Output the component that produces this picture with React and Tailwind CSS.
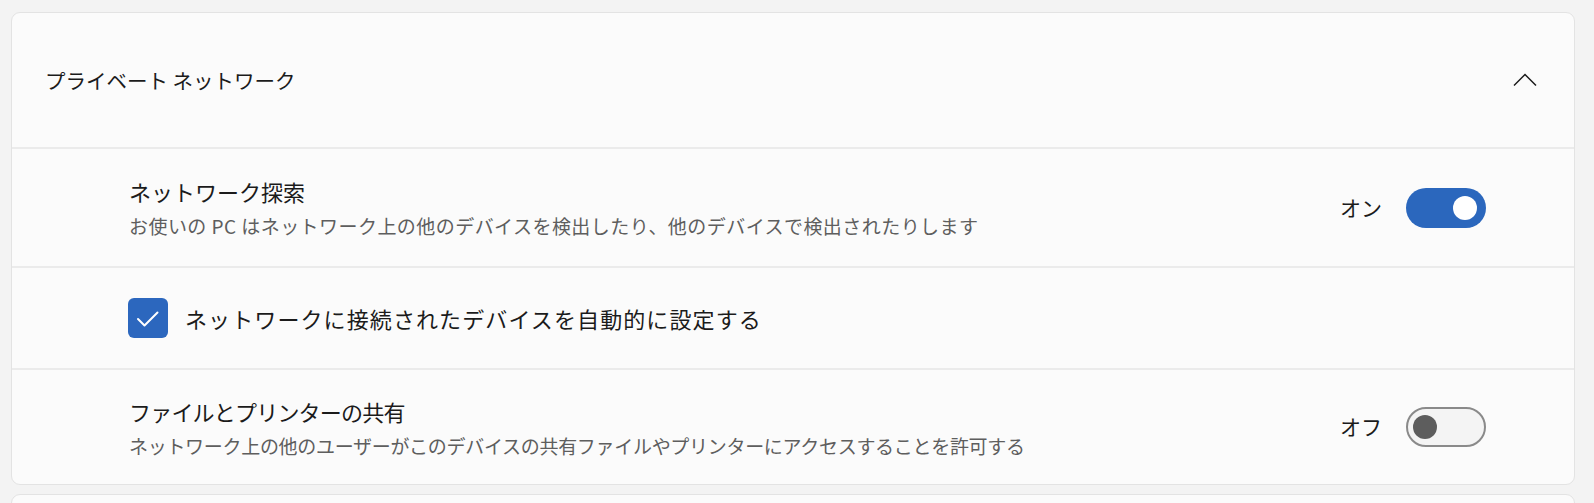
import React from "react";

const FONT = { fontFamily: '"Noto Sans CJK JP", "Noto Sans", sans-serif' };

function Toggle({ on }) {
  if (on) {
    return (
      <div className="flex h-[40px] w-[80px] items-center justify-end rounded-full bg-[#2b67bd] pr-[9px]">
        <div className="h-[24px] w-[24px] rounded-full bg-white" />
      </div>
    );
  }
  return (
    <div className="flex h-[40px] w-[80px] items-center justify-start rounded-full border-2 border-[#8a8a8a] bg-[#f4f4f4] pl-[5px]">
      <div className="h-[24px] w-[24px] rounded-full bg-[#5d5d5d]" />
    </div>
  );
}

function SettingRow({ title, desc, on, height, last, titleTrack, descTrack }) {
  return (
    <div
      className={`flex items-center justify-between pl-[117px] pr-[88px] ${height} ${
        last ? "" : "border-b-2 border-[#ebebeb]"
      }`}
    >
      <div className="flex flex-col">
        <div className={`h-[30px] text-[22px] leading-[30px] text-[#1b1b1b] ${titleTrack}`}>{title}</div>
        <div className={`mt-[6px] h-[27px] text-[19px] leading-[27px] text-[#5e5e5e] ${descTrack}`}>
          {desc}
        </div>
      </div>
      <div className="flex items-center gap-[24px]">
        <span className="text-[21px] text-[#1b1b1b]">{on ? "オン" : "オフ"}</span>
        <Toggle on={on} />
      </div>
    </div>
  );
}

export default function App() {
  return (
    <div
      className="h-[503px] w-[1594px] overflow-hidden bg-[#f3f3f3] pl-[11px] pr-[19px] pt-[12px]"
      style={FONT}
    >
      <div className="flex flex-col gap-[9px]">
        <div className="flex flex-col rounded-[9px] border border-[#e3e3e3] bg-[#fbfbfb]">
          {/* Header */}
          <div className="flex h-[136px] items-center justify-between border-b-2 border-[#ebebeb] pl-[33px] pr-[37px]">
            <span className="text-[20.5px] text-[#1b1b1b]">プライベート ネットワーク</span>
            <svg width="24" height="14" viewBox="0 0 24 14" fill="none">
              <path d="M1 12.5 L12 1.5 L23 12.5" stroke="#1b1b1b" strokeWidth="1.5" />
            </svg>
          </div>

          <SettingRow
            title="ネットワーク探索"
            desc="お使いの PC はネットワーク上の他のデバイスを検出したり、他のデバイスで検出されたりします"
            on={true}
            height="h-[119px]"
            titleTrack="tracking-[0px]"
            descTrack="tracking-[0.45px]"
          />

          {/* Checkbox row */}
          <div className="flex h-[102px] items-center gap-[17px] border-b-2 border-[#ebebeb] pl-[116px]">
            <div className="flex h-[40px] w-[40px] items-center justify-center rounded-[6px] bg-[#2c67be]">
              <svg width="40" height="40" viewBox="0 0 40 40" fill="none">
                <path
                  d="M10 21 L16.5 27.5 L29.5 14.5"
                  stroke="white"
                  strokeWidth="2"
                  strokeLinecap="round"
                  strokeLinejoin="round"
                />
              </svg>
            </div>
            <span className="text-[22px] tracking-[1.1px] text-[#1b1b1b]">
              ネットワークに接続されたデバイスを自動的に設定する
            </span>
          </div>

          <SettingRow
            title="ファイルとプリンターの共有"
            desc="ネットワーク上の他のユーザーがこのデバイスの共有ファイルやプリンターにアクセスすることを許可する"
            on={false}
            height="h-[114px]"
            last
            titleTrack="tracking-[-0.8px]"
            descTrack="tracking-[-0.3px]"
          />
        </div>

        <div className="h-[60px] rounded-t-[9px] border border-[#e3e3e3] bg-[#fbfbfb]" />
      </div>
    </div>
  );
}
